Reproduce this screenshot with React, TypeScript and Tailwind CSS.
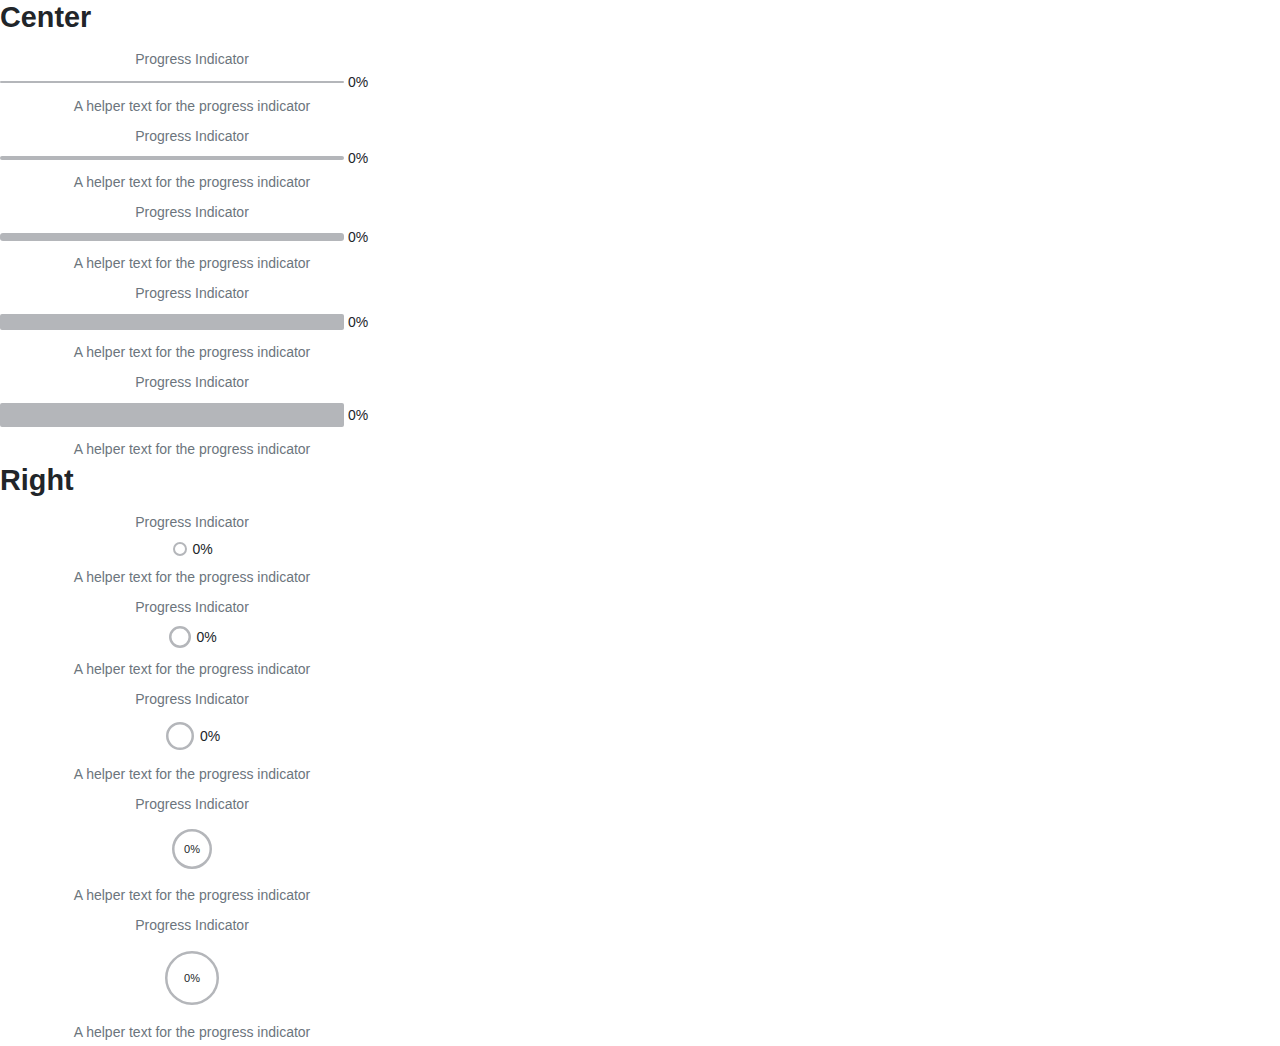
import React from 'react';

type BarItem = { bar: string; row: string };
type RingItem = { size: number; stroke: number; row: string; inner?: string; gap?: string };

const bars: BarItem[] = [
  { bar: 'h-[2px] rounded-full', row: 'h-[27px]' },
  { bar: 'h-[4px] rounded-full', row: 'h-[26px] pb-[2px]' },
  { bar: 'h-[8px] rounded-[3px]', row: 'h-[31px]' },
  { bar: 'h-[16px] rounded-[2px]', row: 'h-[39px]' },
  { bar: 'h-[24px] rounded-[2px]', row: 'h-[47px]' },
];

const rings: RingItem[] = [
  { size: 14, stroke: 2, row: 'h-[35px] pl-[2px]', gap: 'gap-[5px]' },
  { size: 22, stroke: 2.5, row: 'h-[42px] pl-[2px]', gap: 'gap-[5px]' },
  { size: 28, stroke: 2.5, row: 'h-[55px] pl-[2px]', gap: 'gap-[6px]' },
  { size: 40, stroke: 2.5, row: 'h-[71px]', inner: 'text-[11px]' },
  { size: 54, stroke: 2.5, row: 'h-[87px]', inner: 'text-[11px]' },
];

const Ring: React.FC<{ size: number; stroke: number }> = ({ size, stroke }) => {
  const r = (size - stroke) / 2;
  return (
    <svg width={size} height={size} viewBox={`0 0 ${size} ${size}`} className="block">
      <circle cx={size / 2} cy={size / 2} r={r} fill="none" stroke="#b4b6ba" strokeWidth={stroke} />
    </svg>
  );
};

const Label = () => <div className="h-5 leading-5 text-center text-[#6c757d]">Progress Indicator</div>;
const Helper = () => (
  <div className="h-5 leading-5 text-center text-[#6c757d]">A helper text for the progress indicator</div>
);

export default function App() {
  return (
    <div className="w-[384px] bg-white text-[14px] font-['Liberation_Sans',Arial,sans-serif]">
      <h2 className="pt-[2px] text-[28.8px] leading-[1.1] font-bold text-[#212529]">Center</h2>
      <div className="mt-[15px] flex flex-col gap-[10px]">
        {bars.map((b, i) => (
          <div key={i}>
            <Label />
            <div className={`flex items-center ${b.row}`}>
              <div className={`w-[344px] bg-[#b4b6ba] ${b.bar}`} />
              <span className="ml-1 leading-5 text-[#212529]">0%</span>
            </div>
            <Helper />
          </div>
        ))}
      </div>
      <h2 className="mt-[6px] text-[28.8px] leading-[1.1] font-bold text-[#212529]">Right</h2>
      <div className="mt-[16px] flex flex-col gap-[10px]">
        {rings.map((r, i) => (
          <div key={i}>
            <Label />
            <div className={`flex items-center justify-center pb-[2px] ${r.row} ${r.gap ?? ''}`}>
              {r.inner ? (
                <div className="relative" style={{ width: r.size, height: r.size }}>
                  <Ring size={r.size} stroke={r.stroke} />
                  <span className={`absolute inset-0 flex items-center justify-center text-[#212529] ${r.inner}`}>
                    0%
                  </span>
                </div>
              ) : (
                <>
                  <Ring size={r.size} stroke={r.stroke} />
                  <span className="leading-5 text-[#212529]">0%</span>
                </>
              )}
            </div>
            <Helper />
          </div>
        ))}
      </div>
    </div>
  );
}
